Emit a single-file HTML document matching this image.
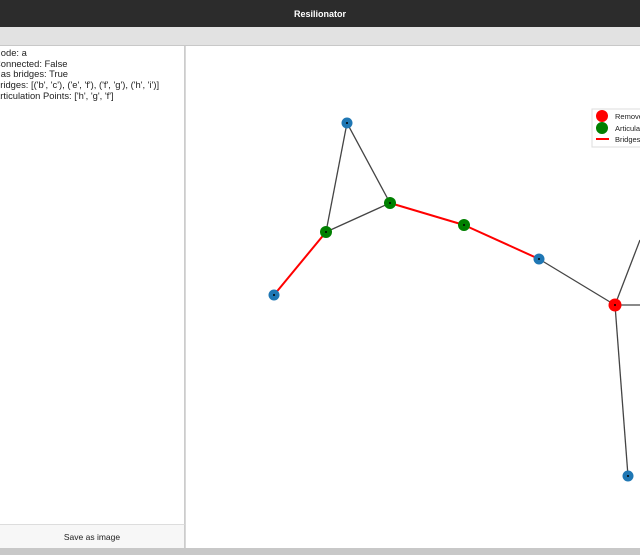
<!DOCTYPE html>
<html><head><style>
body{margin:0;width:640px;height:555px;overflow:hidden;background:#d8d8d8;font-family:"Liberation Sans",sans-serif;position:relative}
.title{position:absolute;left:0;top:0;width:640px;height:27px;background:#2c2c2c;color:#fff;font-size:9px;font-weight:bold;text-align:center;line-height:29px}
.tool{position:absolute;left:0;top:27px;width:640px;height:18px;background:#e2e2e2;border-bottom:1px solid #c8c8c8}
.left{position:absolute;left:0;top:46px;width:184px;height:476px;background:#fff;border-right:1px solid #ccc;font-size:9.4px;color:#222;line-height:10.7px;padding-top:2px;overflow:hidden;white-space:nowrap}
.left div{margin-left:-6px}
.btn{position:absolute;left:0;top:524px;width:184px;height:24px;background:#f7f7f7;border-top:1px solid #ddd;border-right:1px solid #ccc;font-size:8.5px;text-align:center;line-height:24px;color:#222}
.canvas{position:absolute;left:186px;top:46px;width:454px;height:502px;background:#fff}
.bot{position:absolute;left:0;top:548px;width:640px;height:7px;background:#c8c8c8}
</style></head><body>
<div class="title">Resilionator</div>
<div class="tool"></div>
<div class="left">
<div>Node: a</div><div>Connected: False</div><div>Has bridges: True</div>
<div>Bridges: [('b', 'c'), ('e', 'f'), ('f', 'g'), ('h', 'i')]</div>
<div>Articulation Points: ['h', 'g', 'f']</div>
</div>
<div class="btn">Save as image</div>
<div class="canvas"></div>
<div class="bot"></div>
<svg style="position:absolute;left:0;top:0" width="640" height="555">
<g stroke="#444" stroke-width="1.3">
<line x1="347" y1="123" x2="390" y2="203"/><line x1="347" y1="123" x2="326" y2="232"/><line x1="326" y1="232" x2="390" y2="203"/>
<line x1="539" y1="259" x2="615" y2="305"/><line x1="615" y1="305" x2="628" y2="476"/><line x1="615" y1="305" x2="640" y2="240"/><line x1="615" y1="305" x2="640" y2="305"/>
</g>
<g stroke="#f00" stroke-width="2">
<line x1="326" y1="232" x2="274" y2="295"/><line x1="390" y1="203" x2="464" y2="225"/><line x1="464" y1="225" x2="539" y2="259"/>
</g>
<g>
<circle cx="347" cy="123" r="5.5" fill="#1f77b4"/><circle cx="274" cy="295" r="5.5" fill="#1f77b4"/><circle cx="539" cy="259" r="5.5" fill="#1f77b4"/><circle cx="628" cy="476" r="5.5" fill="#1f77b4"/>
<circle cx="390" cy="203" r="6" fill="#008000"/><circle cx="326" cy="232" r="6" fill="#008000"/><circle cx="464" cy="225" r="6" fill="#008000"/>
<circle cx="615" cy="305" r="6.5" fill="#f00"/>
</g>
<g fill="#000"><circle cx="347" cy="123" r="1"/><circle cx="274" cy="295" r="1"/><circle cx="539" cy="259" r="1"/><circle cx="628" cy="476" r="1"/><circle cx="390" cy="203" r="1"/><circle cx="326" cy="232" r="1"/><circle cx="464" cy="225" r="1"/><circle cx="615" cy="305" r="1"/></g>
<rect x="592" y="109" width="50" height="38" fill="#fff" stroke="#ddd"/>
<circle cx="602" cy="116" r="6" fill="#f00"/><circle cx="602" cy="128" r="6" fill="#008000"/>
<line x1="596" y1="139" x2="609" y2="139" stroke="#f00" stroke-width="2"/>
<g font-size="7.5" fill="#222" font-family="Liberation Sans,sans-serif"><text x="615" y="119">Removed</text><text x="615" y="131">Articulation</text><text x="615" y="142">Bridges</text></g>
</svg>
</body></html>
